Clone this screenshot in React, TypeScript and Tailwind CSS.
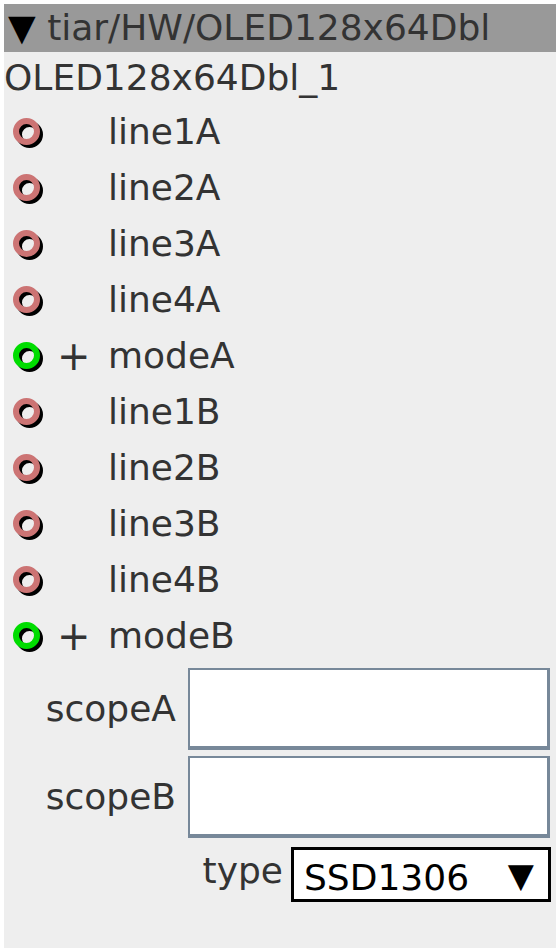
import React from 'react';

const ports = [
  { name: 'line1A', mode: false },
  { name: 'line2A', mode: false },
  { name: 'line3A', mode: false },
  { name: 'line4A', mode: false },
  { name: 'modeA', mode: true },
  { name: 'line1B', mode: false },
  { name: 'line2B', mode: false },
  { name: 'line3B', mode: false },
  { name: 'line4B', mode: false },
  { name: 'modeB', mode: true },
];

const Ring: React.FC<{ on: boolean }> = ({ on }) => (
  <div className="relative w-[31px] h-[31px]">
    {/* shadow ring */}
    <div className="absolute left-[3px] top-[3px] w-[27px] h-[27px] rounded-full border-[6px] border-black" />
    <div
      className={`absolute left-0 top-0 w-[27px] h-[27px] rounded-full border-[6px] ${
        on ? 'border-[#00dd00]' : 'border-[#cc7474]'
      }`}
    />
  </div>
);

const App: React.FC = () => {
  return (
    <div className="w-[560px] h-[952px] bg-white p-[4px] font-['DejaVu_Sans',sans-serif] text-[36px] text-[#333333]">
      <div className="w-[552px] h-[944px] bg-[#eeeeee] flex flex-col">
        {/* Header */}
        <div className="h-[48px] bg-[#999999] flex items-center pl-[4px] leading-none whitespace-nowrap">
          <span className="text-black">▼</span>&nbsp;tiar/HW/OLED128x64Dbl
        </div>

        {/* Title */}
        <div className="h-[52px] flex items-center leading-none">OLED128x64Dbl_1</div>

        {/* Ports */}
        <div className="flex flex-col">
          {ports.map((p) => (
            <div key={p.name} className="h-[56px] flex items-center leading-none">
              <div className="w-[53px] pl-[9px] pt-[2px]">
                <Ring on={p.mode} />
              </div>
              <div className="w-[51px] text-[40px]">{p.mode ? '+' : ''}</div>
              <div>{p.name}</div>
            </div>
          ))}
        </div>

        {/* Fields */}
        <div className="flex flex-col gap-[6px] mt-[4px]">
          {['scopeA', 'scopeB'].map((s) => (
            <div key={s} className="flex items-center">
              <div className="w-[184px] text-right pr-[12px] leading-none">{s}</div>
              <div className="w-[362px] h-[82px] bg-white border-t-2 border-l-2 border-r-[3px] border-b-4 border-[#778899]" />
            </div>
          ))}
        </div>

        <div className="flex items-start mt-[9px]">
          <div className="w-[287px] text-right pr-[8px] leading-none pt-[6px]">type</div>
          <div className="w-[260px] h-[55px] bg-white border-[3px] border-black flex items-center justify-between pl-[10px] pr-[14px] text-black leading-none">
            <span className="pt-[6px]">SSD1306</span>
            <span className="text-[34px]">▼</span>
          </div>
        </div>
      </div>
    </div>
  );
};

export default App;
